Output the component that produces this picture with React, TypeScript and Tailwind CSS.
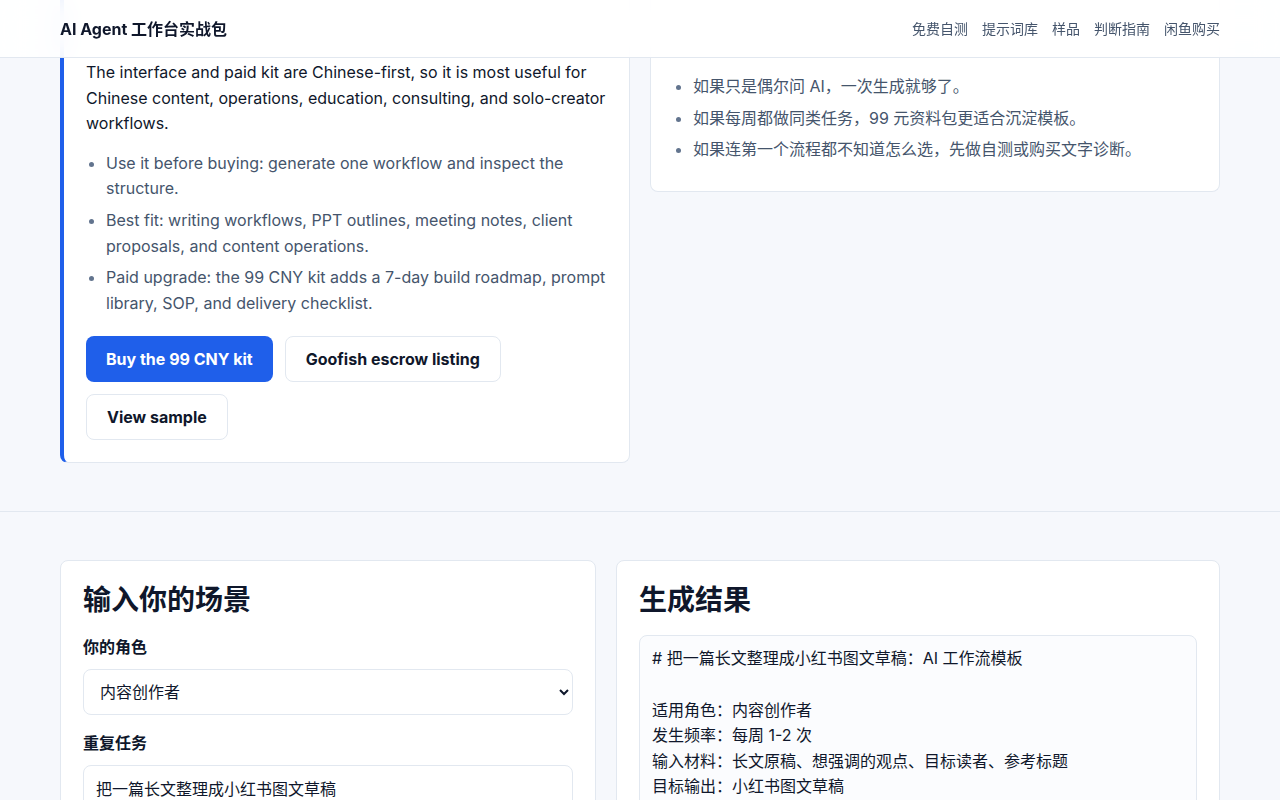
import { useState } from 'react'

const navLinks = ['免费自测', '提示词库', '样品', '判断指南', '闲鱼购买']

const fitNotes = [
  'Use it before buying: generate one workflow and inspect the structure.',
  'Best fit: writing workflows, PPT outlines, meeting notes, client proposals, and content operations.',
  'Paid upgrade: the 99 CNY kit adds a 7-day build roadmap, prompt library, SOP, and delivery checklist.',
]

const judgeNotes = [
  '如果只是偶尔问 AI，一次生成就够了。',
  '如果每周都做同类任务，99 元资料包更适合沉淀模板。',
  '如果连第一个流程都不知道怎么选，先做自测或购买文字诊断。',
]

const roles = ['内容创作者', '运营', '教育培训', '咨询顾问', '独立创作者']

function buildOutput(role: string, task: string) {
  return [
    `# ${task}：AI 工作流模板`,
    '',
    `适用角色：${role}`,
    '发生频率：每周 1-2 次',
    '输入材料：长文原稿、想强调的观点、目标读者、参考标题',
    '目标输出：小红书图文草稿',
    '',
    '## 第 1 步：整理输入',
    '把原稿、观点和读者画像一次性交给 AI，先让它复述重点。',
  ].join('\n')
}

function Header() {
  return (
    <header className="fixed inset-x-0 top-0 z-10 h-[58px] border-b border-slate-200 bg-white/90 backdrop-blur-md">
      <div className="mx-auto flex h-full max-w-[1160px] items-center justify-between">
        <span className="text-base font-bold text-slate-900">AI Agent 工作台实战包</span>
        <nav className="flex gap-3.5 text-sm text-slate-600">
          {navLinks.map((link) => (
            <a key={link} href="#" className="hover:text-slate-900">{link}</a>
          ))}
        </nav>
      </div>
    </header>
  )
}

export default function App() {
  const [role, setRole] = useState(roles[0])
  const [task, setTask] = useState('把一篇长文整理成小红书图文草稿')

  return (
    <div className="min-h-screen bg-[#f6f8fc] font-['Inter','Noto_Sans_CJK_SC',sans-serif] text-slate-900">
      <Header />

      {/* top of this section sits under the sticky header */}
      <section className="pb-12">
        <div className="mx-auto grid max-w-[1160px] grid-cols-2 items-start gap-5">
          <div className="rounded-b-lg border border-t-0 border-l-4 border-slate-200 border-l-[#1f5fea] bg-white px-[22px] pt-[60px] pb-[22px]">
            <p className="leading-[1.6]">
              The interface and paid kit are Chinese-first, so it is most useful for Chinese content, operations, education, consulting, and solo-creator workflows.
            </p>
            <ul className="mt-[14px] list-disc space-y-1.5 pl-5 leading-[1.6] text-slate-600 marker:text-slate-500">
              {fitNotes.map((note) => (
                <li key={note}>{note}</li>
              ))}
            </ul>
            <div className="mt-5 flex flex-wrap gap-3">
              <a href="#" className="flex h-[46px] items-center rounded-lg bg-[#1f5fea] px-5 font-bold text-white">Buy the 99 CNY kit</a>
              <a href="#" className="flex h-[46px] items-center rounded-lg border border-slate-200 bg-white px-5 font-bold">Goofish escrow listing</a>
              <a href="#" className="flex h-[46px] items-center rounded-lg border border-slate-200 bg-white px-5 font-bold">View sample</a>
            </div>
          </div>

          <div className="rounded-b-lg border border-t-0 border-slate-200 bg-white px-[22px] pt-[74px] pb-[28px]">
            <ul className="list-disc space-y-1.5 pl-5 leading-[1.6] text-slate-600 marker:text-slate-500">
              {judgeNotes.map((note) => (
                <li key={note}>{note}</li>
              ))}
            </ul>
          </div>
        </div>
      </section>

      <section className="border-t border-slate-200 pt-12 pb-16">
        <div className="mx-auto grid max-w-[1160px] grid-cols-[536px_1fr] items-start gap-5">
          <div className="rounded-lg border border-slate-200 bg-white p-[22px]">
            <h2 className="mb-[17px] text-[28px] leading-[35px] font-bold">输入你的场景</h2>
            <label className="mb-[10px] block font-semibold">你的角色</label>
            <select
              value={role}
              onChange={(e) => setRole(e.target.value)}
              className="h-[46px] w-full rounded-lg border border-slate-200 bg-white px-3 text-base"
            >
              {roles.map((r) => (
                <option key={r}>{r}</option>
              ))}
            </select>
            <label className="mt-4 mb-[10px] block font-semibold">重复任务</label>
            <input
              value={task}
              onChange={(e) => setTask(e.target.value)}
              className="h-[46px] w-full rounded-lg border border-slate-200 bg-white px-3 text-base"
            />
            <label className="mt-4 mb-[10px] block font-semibold">发生频率</label>
            <input
              defaultValue="每周 1-2 次"
              className="h-[46px] w-full rounded-lg border border-slate-200 bg-white px-3 text-base"
            />
          </div>

          <div className="rounded-lg border border-slate-200 bg-white p-[22px]">
            <h2 className="mb-[17px] text-[28px] leading-[35px] font-bold">生成结果</h2>
            <pre className="rounded-lg border border-slate-200 bg-[#fbfcfe] px-3 pt-[10px] pb-3 font-['Inter','Noto_Sans_CJK_SC',sans-serif] text-base leading-[1.6] whitespace-pre-wrap text-slate-900">
              {buildOutput(role, task)}
            </pre>
          </div>
        </div>
      </section>
    </div>
  )
}
